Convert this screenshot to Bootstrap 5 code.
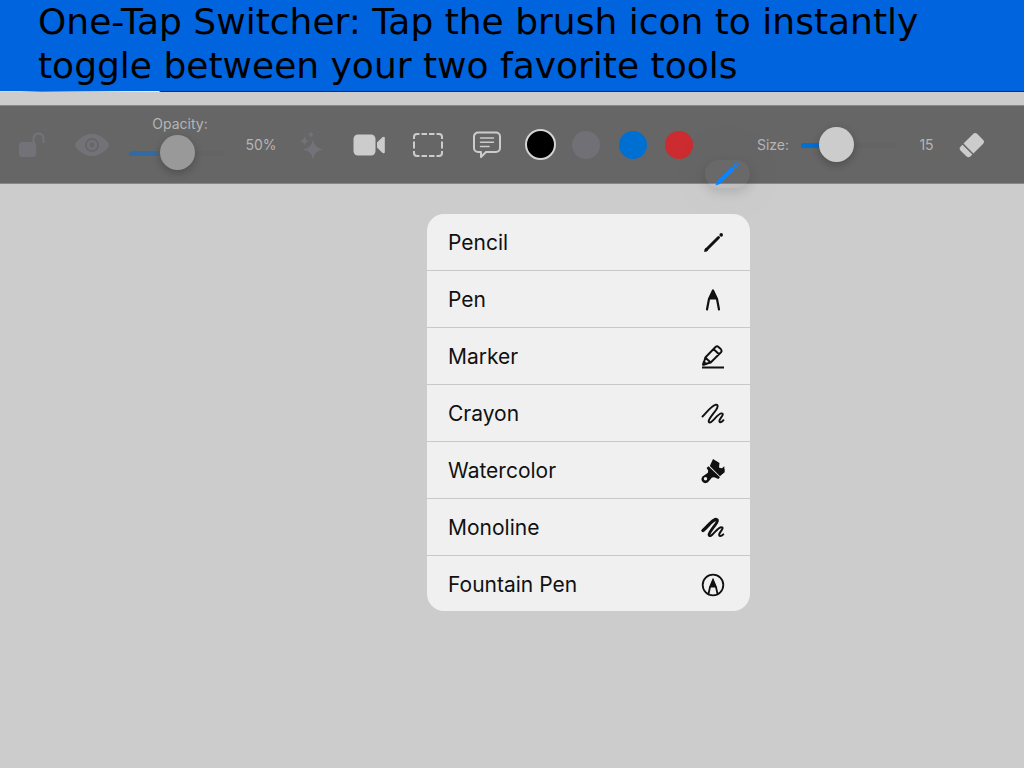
<!DOCTYPE html>
<html lang="en">
<head>
<meta charset="utf-8">
<meta name="viewport" content="width=device-width, initial-scale=1">
<title>One-Tap Switcher</title>
<link href="https://cdn.jsdelivr.net/npm/bootstrap@5.3.0/dist/css/bootstrap.min.css" rel="stylesheet">
<style>
  body { background: #ccc; font-family: Inter, "Liberation Sans", sans-serif; }
  .banner { background: #0064de; color: #000; padding: 0 38px 3px; }
  .banner h1 { font: 400 36px/44px "DejaVu Sans", sans-serif; }
  .seam { height: 1px; background: linear-gradient(90deg, #ded6ca 0 2%, #5e7fae 4%, #c5a581 7%, #f0dfcc 12%, #eee 15.5%, #162a4b 15.7%); }
  .tools {
    display: grid; height: 79px; margin-top: 13px;
    grid-template-columns: 62fr 60fr 110fr 58fr 44fr 70fr 48fr 70fr 36fr 56fr 38fr 54fr 42fr 50fr 102fr 53fr 38fr 33fr;
    background: #666; border: solid #888; border-width: 1px 0; color: #ccc; font-size: 14px;
  }
  .tools > * { min-width: 0; display: flex; align-items: center; justify-content: center; }
  .tools button { background: none; border: 0; padding: 0; color: inherit; }
  .tools svg { flex: none; }
  .tools .dim { color: #727278; }
  .tools label, .tools output { color: #b5b5b5; line-height: 20px; white-space: nowrap; }
  .slider { appearance: none; width: 96px; height: 38px; background: none; flex: none; --fill: #006fd2; --knob: #ccc; }
  .slider::-webkit-slider-runnable-track { height: 5px; border-radius: 3px; background: linear-gradient(90deg, var(--fill) 30%, #646466 30%); }
  .slider::-webkit-slider-thumb { appearance: none; width: 35px; height: 35px; margin-top: -16px; border-radius: 50%; background: var(--knob); box-shadow: 0 3px 9px rgba(0,0,0,.24); }
  .slider.faded { --fill: #306ca3; --knob: #999; }
  .opacity-tool { padding-top: 8px; }
  .size-tool { padding-top: 2px; }
  .opacity-tool label { padding-left: 6px; }
  .tools .swatch { width: 28px; height: 28px; border-radius: 50%; background: var(--ink); }
  .tools .chosen { width: 31px; height: 31px; border: 2px solid #d4d4d4; }
  .tools .brush { width: 45px; height: 28px; flex: none; border-radius: 14px; background: rgba(125,125,125,.16); box-shadow: 0 4px 12px rgba(0,0,0,.14), 0 0 80px rgba(0,0,0,.07); color: #0a84ff; }
  .brush-tool { margin-bottom: -5px; z-index: 2; }
  .tool-menu { position: absolute; top: 108px; right: -2px; width: 323px; border-radius: 17px; background: #f0f0f0; overflow: hidden; }
  .tools .tool-menu button { display: flex; align-items: center; justify-content: space-between; width: 100%; height: 57px; padding: 2px 24px 0 21px; color: #111; font-size: 21px; border-bottom: 1px solid #c8c8c8; }
  .tools .tool-menu li:last-child button { height: 55px; border-bottom: 0; }
</style>
<script src="https://cdn.jsdelivr.net/npm/bootstrap@5.3.0/dist/js/bootstrap.bundle.min.js"></script>
</head>
<body class="min-vh-100 d-flex flex-column">
<header class="banner"><h1 class="m-0">One-Tap Switcher: Tap the brush icon to instantly toggle between your two favorite tools</h1></header>
<div class="seam"></div>
<main class="flex-grow-1">
<div class="tools" role="toolbar" aria-label="Drawing tools">
  <button class="dim" aria-label="Unlock"><svg width="28" height="28" viewBox="0 0 28 28"><rect x="2" y="11" width="17" height="15" rx="3" fill="currentColor"/><path d="M16.500 12V7.500a5 5 0 0 1 10 0V12" fill="none" stroke="currentColor" stroke-width="2.300"/></svg></button>
  <button class="dim" aria-label="Visibility"><svg width="34" height="22" viewBox="0 0 34 22"><path fill-rule="evenodd" fill="currentColor" d="M17 0C8 0 0 8 0 11s8 11 17 11 17-8 17-11S26 0 17 0Zm0 4a7 7 0 1 1 0 14 7 7 0 0 1 0-14Z"/><circle cx="17" cy="11" r="3.800" fill="none" stroke="currentColor" stroke-width="2.800"/></svg></button>
  <div class="opacity-tool flex-column justify-content-start"><label for="opacity">Opacity:</label><input class="slider faded" id="opacity" type="range" min="0" max="100" value="50"></div>
  <output for="opacity">50%</output>
  <button class="dim" aria-label="Effects"><svg width="26" height="30" viewBox="0 0 26 30"><path fill="currentColor" d="M14 9Q15 18 24 19.500Q15 21 14 30Q13 21 4 19.500Q13 18 14 9ZM5.500 6Q6 10.500 10.500 11Q6 11.500 5.500 16Q5 11.500 0 11Q5 10.500 5.500 6ZM12 1Q12.500 4 15 4.500Q12.500 5 12 8Q11.500 5 9 4.500Q11.500 4 12 1Z"/></svg></button>
  <button aria-label="Record"><svg width="32" height="22" viewBox="0 0 32 22"><rect x=".5" y=".5" width="22" height="21" rx="4.500" fill="currentColor"/><path d="M24 8.500 29.300 3.300q2.500-1.600 2.500.8v13.800q0 2.400-2.500.8L24 13.500Z" fill="currentColor"/></svg></button>
  <button aria-label="Select area"><svg width="30" height="24" viewBox="0 0 30 24" fill="none" stroke="currentColor" stroke-width="2"><path d="M1 6V4a3 3 0 0 1 3-3h2.500M8.500 1H14M16 1h5.500M23.500 1H26a3 3 0 0 1 3 3v2M29 8.500v7M29 18v2a3 3 0 0 1-3 3h-2.500M21.500 23H16M14 23H8.500M6.500 23H4a3 3 0 0 1-3-3v-2M1 15.500v-7"/></svg></button>
  <button aria-label="Comment"><svg width="28" height="28" viewBox="0 0 28 28" fill="none" stroke="currentColor" stroke-linejoin="round" stroke-linecap="round"><path stroke-width="2" d="M5 1.500h18a4 4 0 0 1 4 4v11.500a4 4 0 0 1-4 4H13L8 26v-5H5a4 4 0 0 1-4-4V5.500a4 4 0 0 1 4-4Z"/><path stroke-width="1.500" d="M7.500 7h13M7.500 11.300h13M7.500 15.600H16"/></svg></button>
  <div><button class="swatch chosen" style="--ink:#000" aria-label="Black"></button></div>
  <div><button class="swatch" style="--ink:#707076" aria-label="Gray"></button></div>
  <div><button class="swatch" style="--ink:#006fd2" aria-label="Blue"></button></div>
  <div><button class="swatch" style="--ink:#cc2b30" aria-label="Red"></button></div>
  <div class="brush-tool position-relative align-items-end">
    <button class="brush" aria-label="Brush" aria-expanded="true"><svg width="26" height="26" viewBox="0 0 26 26"><path fill="currentColor" d="m1.500 24.500 1.500-4.500L18 5.500l3 3L6 23ZM19 4.600l1.800-1.800 3 3-1.800 1.800ZM22 1.800q1.500-1 2.500 0 1 1.200-.1 2.500Z"/></svg></button>
    <ul class="tool-menu list-unstyled m-0">
      <li><button>Pencil<svg width="26" height="26" viewBox="0 0 26 26"><path d="M6 20 18.500 7.500" stroke="currentColor" stroke-width="3" stroke-linecap="round"/><path d="m4 22 1.300-4.200 2.900 2.900Z" fill="currentColor"/><circle cx="21.200" cy="4.900" r="1.800" fill="currentColor"/></svg></button></li>
      <li><button>Pen<svg width="26" height="26" viewBox="0 0 26 26"><path d="m7 22.500 2-10.500 4-8.500 4 8.500 2 10.500" fill="none" stroke="currentColor" stroke-width="2.200" stroke-linecap="round" stroke-linejoin="round"/><path d="M8 12.500 13 3l5 9.500Z" fill="currentColor"/></svg></button></li>
      <li><button>Marker<svg width="26" height="26" viewBox="0 0 26 26" fill="none" stroke="currentColor" stroke-width="1.900" stroke-linejoin="round"><path d="m3.500 20.500 1.800-7L15.500 3q1.500-1.300 3 0l2.500 2.300q1.300 1.500 0 3L10.700 18.500ZM5.300 13.500l5.400 5M13.500 5l5.500 5.300"/><path fill="currentColor" d="m3 20.800.8-3 2.200 2.200Z"/><path d="M2 23.500h22" stroke-width="2"/></svg></button></li>
      <li><button>Crayon<svg width="26" height="26" viewBox="0 0 26 26"><path d="M2.500 15.500C7 11 11 5 15.500 3.800c3.500-.7 2 3.200.5 5.200-3.500 4.800-6.800 8.500-7.300 11-.3 2.200 2 1.700 3.500.2 3.300-3.200 6.500-7.700 9.300-7.800 3.600-.1-1.200 4.600-2 6.800-.7 3 2 2.500 4 0" fill="none" stroke="currentColor" stroke-width="1.900" stroke-linecap="round"/></svg></button></li>
      <li><button>Watercolor<svg width="26" height="26" viewBox="0 0 26 26" fill="currentColor"><path d="M13 1 19.500 5l-.5 4.500 5.500 1.700-.3 3-4.200 4L9.800 8Z"/><path d="m20.500 11.500 3.800-3.200.3 6-3 2.200Z"/><path d="m8.500 8.300 11.500 11-1.700 1.700-4-1.800-2.300.3-3 3.500a4 4 0 1 1-5-5.600l3.900-2.700.3-2.300-1.600-2.400Zm-3 10.800a1.700 1.700 0 1 0 0 3.400 1.700 1.700 0 0 0 0-3.400Z" fill-rule="evenodd"/></svg></button></li>
      <li><button>Monoline<svg width="26" height="26" viewBox="0 0 26 26" fill="none" stroke="currentColor" stroke-linecap="round" stroke-linejoin="round"><path stroke-width="3.400" d="M3 15.500C8 11.500 11 6 15.500 4.500"/><path stroke-width="2.800" d="M15.500 4.500c3.500-.7 1.500 3 0 5-3.500 4.500-6.500 8.300-6.500 10.300"/><path stroke-width="2" d="M9 19.800c0 2.200 2 1.200 3.500-.3 3.300-3.200 6.200-7.300 8.800-7.300 3.500.1-1.300 4.600-2 6.800-.7 2.800 1.800 2.700 4 .4"/></svg></button></li>
      <li><button>Fountain Pen<svg width="26" height="26" viewBox="0 0 26 26" fill="none" stroke="currentColor" stroke-width="1.800"><circle cx="13" cy="13" r="10.300"/><path d="m8.500 22 1.500-7 3-7 3 7 1.500 7"/><path fill="currentColor" stroke="none" d="m9.500 15.500 3.500-9 3.500 9Z"/></svg></button></li>
    </ul>
  </div>
  <label for="size">Size:</label>
  <div class="size-tool"><input class="slider" id="size" type="range" min="0" max="50" value="15"></div>
  <output for="size">15</output>
  <button aria-label="Eraser"><svg width="26" height="26" viewBox="0 0 26 26"><g fill="currentColor" transform="rotate(-45 13 13)"><path d="M8 6h13.500q3 0 3 3v8q0 3-3 3H8Z"/><path d="M6.500 6v14H4q-3 0-3-3V9q0-3 3-3Z"/></g></svg></button>
</div>
</main>
</body>
</html>
